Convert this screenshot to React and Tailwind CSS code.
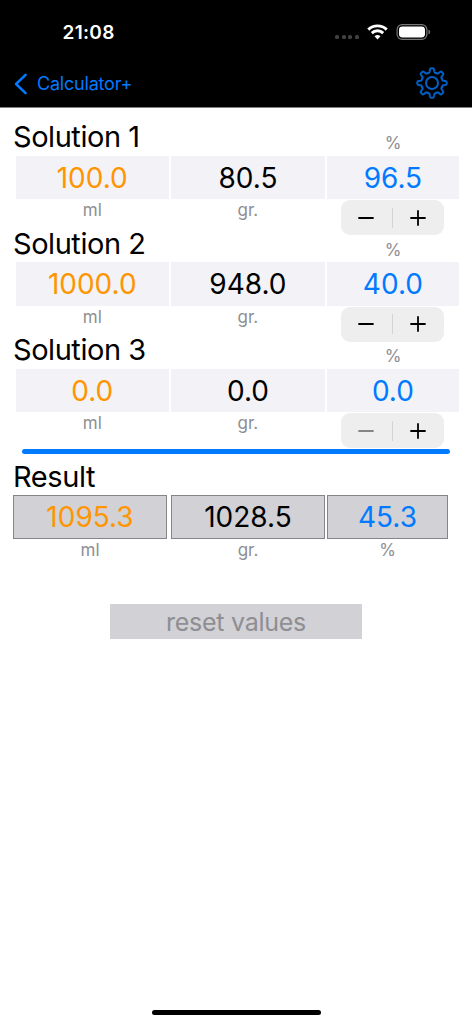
import { useState } from "react"

const initialSolutions = [
  { name: "Solution 1", ml: "100.0", gr: "80.5", percent: "96.5" },
  { name: "Solution 2", ml: "1000.0", gr: "948.0", percent: "40.0" },
  { name: "Solution 3", ml: "0.0", gr: "0.0", percent: "0.0" },
]

const StatusBar = () => (
  <div className="flex h-[60px] items-start justify-between pl-[62.5px] pr-[41px] pt-[22px]">
    <span className="text-[19px] font-semibold leading-[22px] tracking-[0.3px] text-white">21:08</span>
    <div className="flex items-center pt-[2px]">
      <div className="mr-2 mt-[10px] flex gap-[2.6px]">
        <span className="size-[4px] rounded-[1.5px] bg-[#414141]" />
        <span className="size-[4px] rounded-[1.5px] bg-[#414141]" />
        <span className="size-[4px] rounded-[1.5px] bg-[#414141]" />
        <span className="size-[4px] rounded-[1.5px] bg-[#414141]" />
      </div>
      <svg width="21" height="16" viewBox="0 0 21 16" fill="none" stroke="#fff" strokeWidth="2.9">
        <path d="M1.3 5.6a13.2 13.2 0 0 1 18.4 0" />
        <path d="M4.8 9.1a8.2 8.2 0 0 1 11.4 0" />
        <path d="M10.5 15.4 7.5 12.3a4.4 4.4 0 0 1 6 0z" fill="#fff" stroke="none" />
      </svg>
      <svg className="ml-2" width="35" height="16" viewBox="0 0 35 16">
        <rect x="1.1" y=".7" width="29.8" height="14.6" rx="5" fill="none" stroke="#777" strokeWidth="1.2" />
        <rect x="3" y="2.5" width="26" height="11" rx="3.4" fill="#fff" />
        <path d="M32.5 5.5q1.7.7 1.7 2.5t-1.7 2.5z" fill="#777" />
      </svg>
    </div>
  </div>
)

// one tooth plus the valley next to it, repeated every 45 degrees
const toothAngles = [0, 45, 90, 135, 180, 225, 270, 315]

const GearIcon = () => (
  <svg width="32" height="32" viewBox="0 0 32 32" fill="none" stroke="#0060c8" strokeWidth="2" strokeLinecap="round" strokeLinejoin="round">
    {toothAngles.map((angle) => (
      <path
        key={angle}
        transform={`rotate(${angle} 16 16)`}
        d="M11.8 5.9Q13.4 6.2 13.7 4.4L13.9 2.6Q14.1 1.3 15.2 1.3h1.6Q17.900 1.300 18.100 2.600L18.300 4.400Q18.600 6.200 20.200 5.900"
      />
    ))}
    <circle cx="16" cy="16" r="6" />
  </svg>
)

const NavBar = () => (
  <div className="flex h-[47px] items-center justify-between pl-[14px] pr-6">
    <button className="flex items-center text-[#007aff]">
      <svg width="14" height="22" viewBox="0 0 14 22" fill="none" stroke="currentColor" strokeWidth="2.5" strokeLinecap="round" strokeLinejoin="round">
        <path d="M11.6 1.8 2 11l9.6 9.2" />
      </svg>
      <span className="ml-[9px] text-[18px] tracking-[-0.2px]">Calculator+</span>
    </button>
    <button className="-mt-[2px]">
      <GearIcon />
    </button>
  </div>
)

const Stepper = ({ canDecrease }) => (
  <div className="mt-px flex h-[35px] w-[103px] items-center rounded-[9px] bg-[#eeeeee]">
    <button className={canDecrease ? "flex flex-1 justify-center text-black" : "flex flex-1 justify-center text-[#858585]"}>
      <svg width="16" height="16" viewBox="0 0 16 16" stroke="currentColor" strokeWidth="1.8" strokeLinecap="round">
        <path d="M1 8h14" />
      </svg>
    </button>
    <span className="h-5 w-px bg-[#d4d4d6]" />
    <button className="flex flex-1 justify-center text-black">
      <svg width="16" height="16" viewBox="0 0 16 16" stroke="currentColor" strokeWidth="1.8" strokeLinecap="round">
        <path d="M1 8h14M8 1v14" />
      </svg>
    </button>
  </div>
)

const Solution = ({ solution, onChange }) => {
  const field = "h-[43.5px] w-full min-w-0 bg-[#f2f2f7] pt-px text-center text-[28px] outline-none"

  return (
    <section className="h-[106.5px]">
      <div className="flex h-[35.5px] justify-between">
        <h2 className="pl-[13px] text-[29px] leading-[34px] tracking-[-0.45px]">{solution.name}</h2>
        <span className="mr-[13px] w-[132px] pt-[11px] text-center text-[17px] leading-6 text-[#8e8e93]">%</span>
      </div>
      <div className="grid grid-cols-[153.5px_153.5px_132px] gap-x-[2.2px] pl-[15.5px]">
        <input className={`${field} text-[#ff9500]`} value={solution.ml} onChange={(e) => onChange("ml", e.target.value)} />
        <input className={`${field} text-black`} value={solution.gr} onChange={(e) => onChange("gr", e.target.value)} />
        <input className={`${field} text-[#007aff]`} value={solution.percent} onChange={(e) => onChange("percent", e.target.value)} />
        <span className="text-center text-[17px] leading-[23px] text-[#8e8e93]">ml</span>
        <span className="text-center text-[17px] leading-[23px] text-[#8e8e93]">gr.</span>
        <div className="flex h-[27px] justify-center pr-px">
          <Stepper canDecrease={Number(solution.percent) > 0} />
        </div>
      </div>
    </section>
  )
}

const Result = () => {
  const cell = "h-11 border border-[#858587] bg-[#d1d1d6] text-center text-[28px] leading-[42px]"

  return (
    <section className="pt-2">
      <h2 className="h-[33px] pl-[13px] text-[29px] leading-[30px] tracking-[-0.4px]">Result</h2>
      <div className="flex pl-[13px] text-[17px] leading-[23px] text-[#8e8e93]">
        <div className="w-[154px] text-center">
          <div className={`${cell} text-[#ff9500]`}>1095.3</div>
          ml
        </div>
        <div className="ml-1 w-[154px] text-center">
          <div className={`${cell} text-black`}>1028.5</div>
          gr.
        </div>
        <div className="ml-0.5 w-[121px] text-center">
          <div className={`${cell} text-[#007aff]`}>45.3</div>
          %
        </div>
      </div>
    </section>
  )
}

const App = () => {
  const [solutions, setSolutions] = useState(initialSolutions)

  const updateSolution = (index, key, value) => {
    setSolutions(solutions.map((item, i) => (i === index ? { ...item, [key]: value } : item)))
  }

  return (
    <div className="flex h-[1024px] w-[472px] flex-col overflow-hidden bg-white font-['Inter',sans-serif] text-black">
      <header className="h-[108px] shrink-0 border-b border-[#808080] bg-black">
        <StatusBar />
        <NavBar />
      </header>

      <main className="flex flex-1 flex-col pt-3">
        {solutions.map((solution, index) => (
          <Solution key={solution.name} solution={solution} onChange={(key, value) => updateSolution(index, key, value)} />
        ))}
        <div className="ml-[22px] mt-[9.5px] h-[4.5px] w-[428px] shrink-0 rounded-full bg-[#007aff]" />
        <Result />
        <button className="mx-auto mt-[42px] h-[35px] w-[252px] bg-[#d1d1d6] text-[25px] leading-[36px] tracking-[-0.25px] text-[#8e8e93]">
          reset values
        </button>
      </main>

      <footer className="flex justify-center pb-[9px]">
        <div className="h-[5.5px] w-[169px] rounded-full bg-black" />
      </footer>
    </div>
  )
}

export default App
